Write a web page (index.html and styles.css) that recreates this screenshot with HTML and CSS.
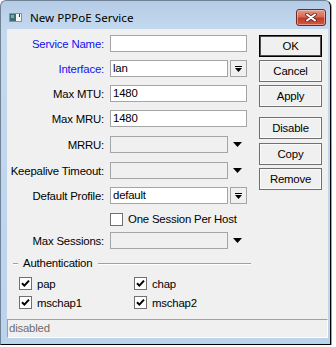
FILE: index.html
```html
<!DOCTYPE html>
<html lang="en">
<head>
    <meta charset="UTF-8">
    <meta name="viewport" content="width=device-width, initial-scale=1.0">
    <title>New PPPoE Service</title>
    <link rel="stylesheet" href="styles.css">
</head>
<body>
    <div class="window">
        <div class="titlebar">
            <svg class="app-icon" width="13" height="9" viewBox="0 0 13 9">
                <rect x="0.5" y="0.5" width="12" height="8" fill="#f4f6f8" stroke="#8a939c"/>
                <rect x="1" y="1" width="6" height="7" fill="#3c6b70"/>
                <rect x="2" y="2" width="3" height="3" fill="#7fa8a6"/>
                <rect x="10" y="1" width="1" height="3" fill="#2c3a44"/>
            </svg>
            <span class="title">New PPPoE Service</span>
            <div class="close">
                <svg width="12" height="9" viewBox="0 0 12 9">
                    <path d="M2 1.5L10 7.5M10 1.5L2 7.5" stroke="#6e2a22" stroke-width="3.6" stroke-linecap="round"/>
                    <path d="M2 1.5L10 7.5M10 1.5L2 7.5" stroke="#ffffff" stroke-width="2" stroke-linecap="round"/>
                </svg>
            </div>
        </div>

        <div class="client">
            <div class="main">
                <div class="form">
                    <div class="row">
                        <span class="label blue">Service Name:</span>
                        <div class="field"></div>
                    </div>
                    <div class="row">
                        <span class="label blue">Interface:</span>
                        <div class="field short">lan</div>
                        <div class="dd-button">
                            <svg width="7" height="6" viewBox="0 0 7 6"><rect x="0" y="0" width="7" height="1"/><path d="M0 2h7L3.5 6z"/></svg>
                        </div>
                    </div>
                    <div class="row">
                        <span class="label">Max MTU:</span>
                        <div class="field">1480</div>
                    </div>
                    <div class="row wide">
                        <span class="label">Max MRU:</span>
                        <div class="field">1480</div>
                    </div>
                    <div class="row wide">
                        <span class="label">MRRU:</span>
                        <div class="field short off"></div>
                        <svg class="arrow" width="9" height="5" viewBox="0 0 9 5"><path d="M0 0h9L4.5 5z"/></svg>
                    </div>
                    <div class="row">
                        <span class="label">Keepalive Timeout:</span>
                        <div class="field short off"></div>
                        <svg class="arrow" width="9" height="5" viewBox="0 0 9 5"><path d="M0 0h9L4.5 5z"/></svg>
                    </div>
                    <div class="row">
                        <span class="label">Default Profile:</span>
                        <div class="field short">default</div>
                        <div class="dd-button">
                            <svg width="7" height="6" viewBox="0 0 7 6"><rect x="0" y="0" width="7" height="1"/><path d="M0 2h7L3.5 6z"/></svg>
                        </div>
                    </div>
                    <div class="row check-row">
                        <span class="label"></span>
                        <span class="box"></span>
                        <span class="check-label">One Session Per Host</span>
                    </div>
                    <div class="row">
                        <span class="label">Max Sessions:</span>
                        <div class="field short off"></div>
                        <svg class="arrow" width="9" height="5" viewBox="0 0 9 5"><path d="M0 0h9L4.5 5z"/></svg>
                    </div>
                </div>

                <div class="buttons">
                    <div class="btn default">OK</div>
                    <div class="btn">Cancel</div>
                    <div class="btn">Apply</div>
                    <div class="btn gap">Disable</div>
                    <div class="btn">Copy</div>
                    <div class="btn">Remove</div>
                </div>
            </div>

            <div class="group">
                <div class="group-head">
                    <span class="rule-start"></span>
                    <span>Authentication</span>
                    <span class="rule"></span>
                </div>
                <div class="checks">
                    <div class="check"><span class="box on"><svg width="9" height="9" viewBox="0 0 9 9"><path d="M1 4.2L3.4 6.6L8 1.6" fill="none" stroke="#000" stroke-width="2"/></svg></span>pap</div>
                    <div class="check"><span class="box on"><svg width="9" height="9" viewBox="0 0 9 9"><path d="M1 4.2L3.4 6.6L8 1.6" fill="none" stroke="#000" stroke-width="2"/></svg></span>chap</div>
                    <div class="check"><span class="box on"><svg width="9" height="9" viewBox="0 0 9 9"><path d="M1 4.2L3.4 6.6L8 1.6" fill="none" stroke="#000" stroke-width="2"/></svg></span>mschap1</div>
                    <div class="check"><span class="box on"><svg width="9" height="9" viewBox="0 0 9 9"><path d="M1 4.2L3.4 6.6L8 1.6" fill="none" stroke="#000" stroke-width="2"/></svg></span>mschap2</div>
                </div>
            </div>

            <div class="status">disabled</div>
        </div>
    </div>
</body>
</html>
```

FILE: styles.css
```css
body {
    margin: 0;
    background: #ffffff;
    font-family: "Liberation Sans", Arial, sans-serif;
    font-size: 11.4px;
    letter-spacing: -0.2px;
    color: #000;
}

.window {
    width: 329px;
    height: 343px;
    border: 1px solid;
    border-color: #6f8296 #000 #000 #6f8296;
    border-radius: 6px 6px 0 0;
    background: linear-gradient(#b5cce7, #c4d9ef 28px, #bcd3ec);
    box-shadow: 1px 1px 0 #3cc6e2;
    display: flex;
    flex-direction: column;
}

.titlebar {
    height: 28px;
    display: flex;
    align-items: flex-start;
    padding-left: 8px;
    box-sizing: border-box;
    padding-top: 8px;
}

.app-icon {
    margin-top: 4px;
}

.title {
    margin-left: 8px;
    font-family: "Noto Sans", sans-serif;
    font-size: 11.6px;
    letter-spacing: 0;
    line-height: 17px;
    color: #000;
}

.close {
    margin-left: auto;
    margin-right: 4px;
    width: 30px;
    height: 17px;
    box-sizing: border-box;
    border: 1px solid #6e2a22;
    border-radius: 3px;
    background: linear-gradient(#e39a86, #d46a55 45%, #c23a28 55%, #cf5a42);
    box-shadow: inset 0 0 0 1px rgba(255, 220, 210, 0.5);
    display: flex;
    align-items: center;
    justify-content: center;
}

.client {
    margin: 0 2px 6px 6px;
    height: 309px;
    background: #f0f0f0;
    display: flex;
    flex-direction: column;
}

.main {
    display: flex;
    padding-top: 6px;
}

.form {
    width: 252px;
}

.row {
    display: flex;
    align-items: center;
    height: 17px;
    margin-bottom: 8px;
}

.row.wide {
    margin-bottom: 9px;
}

.form .row:last-child {
    margin-bottom: 0;
}

.label {
    width: 97px;
    padding-right: 6px;
    text-align: right;
    flex: none;
}

.blue {
    color: #1010f0;
}

.field {
    width: 137px;
    height: 17px;
    box-sizing: border-box;
    border: 1px solid #a5a5a5;
    background: #fff;
    padding-left: 2px;
    line-height: 15px;
}

.field.short {
    width: 118px;
}

.field.off {
    background: #f0f0f0;
}

.dd-button {
    width: 17px;
    height: 17px;
    margin-left: 2px;
    box-sizing: border-box;
    border: 1px solid #a5a5a5;
    background: #f0f0f0;
    display: flex;
    align-items: center;
    justify-content: center;
}

.arrow {
    margin-left: 5px;
}

.check-row {
    height: 14px;
    margin-bottom: 6px;
}

.box {
    width: 13px;
    height: 13px;
    box-sizing: border-box;
    border: 1px solid #707070;
    background: #fff;
    display: flex;
    align-items: center;
    justify-content: center;
    flex: none;
}

.check-label {
    margin-left: 5px;
}

.buttons {
    display: flex;
    flex-direction: column;
}

.btn {
    width: 63px;
    height: 22px;
    box-sizing: border-box;
    border: 1px solid #707070;
    box-shadow: inset 0 0 0 1px #fafafa;
    background: #f0f0f0;
    display: flex;
    align-items: center;
    justify-content: center;
    margin-bottom: 3px;
}

.btn.default {
    border-color: #000;
    box-shadow: inset 0 0 0 1px #505050;
}

.btn.gap {
    margin-top: 7px;
    margin-bottom: 4px;
}

.group {
    margin-top: 7px;
}

.group-head {
    display: flex;
    align-items: center;
    height: 14px;
}

.rule-start,
.rule {
    height: 0;
    border-top: 1px solid #a0a0a0;
    border-bottom: 1px solid #fff;
}

.rule-start {
    width: 5px;
    margin: 1px 5px 0 6px;
}

.rule {
    width: 153px;
    margin: 1px 0 0 6px;
}

.checks {
    display: grid;
    grid-template-columns: 115px 115px;
    row-gap: 6px;
    padding-left: 12px;
    margin-top: 7px;
}

.check {
    display: flex;
    align-items: center;
    height: 13px;
}

.check .box {
    margin-right: 5px;
}

.status {
    margin-top: auto;
    height: 19px;
    box-sizing: border-box;
    border: 1px solid;
    border-color: #a0a0a0 #fff #fff #a0a0a0;
    color: #6d6d6d;
    padding-left: 1px;
    line-height: 17px;
}
```
